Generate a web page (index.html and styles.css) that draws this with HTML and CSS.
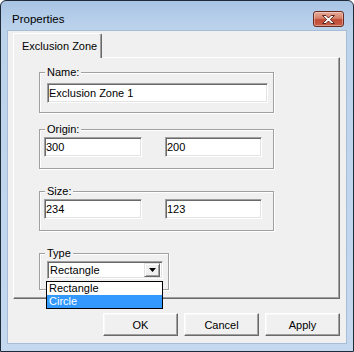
FILE: index.html
```html
<!DOCTYPE html>
<html lang="en">
<head>
    <meta charset="UTF-8">
    <title>Properties</title>
    <link rel="stylesheet" href="styles.css">
</head>
<body>
	<div class="window">
		<div class="titlebar">
			<span class="title">Properties</span>
			<button class="close">
				<svg width="15" height="11" viewBox="0 0 15 11">
					<path d="M1.5 1.5h3.5l2.5 2.5 2.5-2.5h3.5l-4.2 4 4.2 4h-3.5l-2.5-2.5-2.5 2.5h-3.5l4.2-4z" fill="#fff" stroke="#5a2a22" stroke-width="1"/>
				</svg>
			</button>
		</div>

		<div class="client">
			<div class="tabs">
				<div class="tab">Exclusion Zone</div>
			</div>

			<div class="panel">
				<fieldset class="group group-name">
					<legend>Name:</legend>
					<input class="field field-name" type="text" value="Exclusion Zone 1">
				</fieldset>

				<fieldset class="group group-origin">
					<legend>Origin:</legend>
					<div class="pair">
						<input class="field field-a" type="text" value="300">
						<input class="field field-b" type="text" value="200">
					</div>
				</fieldset>

				<fieldset class="group group-size">
					<legend>Size:</legend>
					<div class="pair">
						<input class="field field-a" type="text" value="234">
						<input class="field field-b" type="text" value="123">
					</div>
				</fieldset>

				<fieldset class="group group-type">
					<legend>Type</legend>
					<div class="combo">
						<span class="combo-text">Rectangle</span>
						<span class="combo-btn">
							<svg width="7" height="4" viewBox="0 0 7 4"><path d="M0 0h7L3.5 4z" fill="#000"/></svg>
						</span>
						<ul class="combo-list">
							<li>Rectangle</li>
							<li class="selected">Circle</li>
						</ul>
					</div>
				</fieldset>
			</div>

			<div class="buttons">
				<button class="btn">OK</button>
				<button class="btn">Cancel</button>
				<button class="btn">Apply</button>
			</div>
		</div>
	</div>
</body>
</html>
```

FILE: styles.css
```css
*{
	font-family: 'Liberation Sans', Arial, sans-serif;
	margin: 0;
	padding: 0;
	box-sizing: border-box;
}

body{
	width: 354px;
	height: 352px;
	overflow: hidden;
	background: #fff;
}

/* window frame */
.window {
	width: 354px;
	height: 352px;
	display: flex;
	flex-direction: column;
	border: 1px solid #1f2b38;
	border-radius: 6px 6px 0 0;
	background: linear-gradient(#a9c4e4 0, #bcd3ec 28px, #c4d9f0 100%);
	padding: 0 6px 7px 6px;
}

.titlebar {
	display: flex;
	justify-content: space-between;
	align-items: flex-start;
	height: 29px;
	flex-shrink: 0;
}
.title {
	font-family: 'Liberation Sans', sans-serif;
	font-size: 11.5px;
	line-height: 14px;
	color: #000;
	padding: 11px 0 0 5px;
}
.close {
	display: flex;
	align-items: center;
	justify-content: center;
	width: 31px;
	height: 16px;
	margin: 10px 3px 0 0;
	border: 1px solid #6b2b20;
	border-radius: 3px;
	background: linear-gradient(#e8aa98 0, #d6806a 45%, #c04a34 55%, #c8604a 100%);
	box-shadow: inset 0 0 0 1px rgba(255,255,255,0.35);
}

.client {
	flex: 1;
	display: flex;
	flex-direction: column;
	background: #f0f0f0;
	border: 1px solid #a7bdd6;
	padding: 2px 4px 0 5px;
	font-size: 11px;
	color: #000;
}

/* tab strip */
.tabs {
	display: flex;
	height: 24px;
}
.tab {
	position: relative;
	z-index: 1;
	width: 89px;
	height: 25px;
	padding: 6px 0 0 8px;
	background: #f0f0f0;
	border-top: 1px solid #fff;
	border-left: 1px solid #fff;
	border-right: 1px solid #696969;
	box-shadow: inset -1px 0 0 #a0a0a0;
	border-radius: 2px 2px 0 0;
	line-height: 13px;
}

.panel {
	display: flex;
	flex-direction: column;
	align-items: flex-start;
	width: 327px;
	height: 242px;
	border: 1px solid;
	border-color: #fff #696969 #696969 #fff;
	box-shadow: inset -1px -1px 0 #a0a0a0;
	padding: 8px 0 0 25px;
}

/* group boxes */
.group {
	border: 1px solid #a0a0a0;
	box-shadow: inset 1px 1px 0 #fff, 1px 1px 0 #fff;
	min-width: 0;
	width: 235px;
}
.group legend {
	margin-left: 5px;
	padding: 0 2px;
	line-height: 13px;
	background: #f0f0f0;
}
.group-name {
	padding: 4px 0 9px 0;
}
.group-origin,
.group-size {
	padding: 1px 0 11px 0;
}
.group-origin {
	margin-top: 10px;
}
.group-size,
.group-type {
	margin-top: 16px;
}
.group-type {
	width: 130px;
	padding: 1px 0 10px 0;
}

.field {
	height: 20px;
	border: 1px solid;
	border-color: #a0a0a0 #fff #fff #a0a0a0;
	box-shadow: inset 1px 1px 0 #696969, inset -1px -1px 0 #e3e3e3;
	background: #fff;
	padding: 0 0 0 1px;
	font-size: 11px;
	color: #000;
	outline: none;
}
.field-name {
	width: 221px;
	margin-left: 7px;
}
.pair {
	display: flex;
	gap: 23px;
	margin-left: 4px;
}
.field-a {
	width: 98px;
}
.field-b {
	width: 97px;
}

/* combo box */
.combo {
	position: relative;
	display: flex;
	align-items: center;
	justify-content: space-between;
	width: 116px;
	height: 18px;
	margin-left: 7px;
	border: 1px solid;
	border-color: #a0a0a0 #fff #fff #a0a0a0;
	box-shadow: inset 1px 1px 0 #696969, inset -1px -1px 0 #e3e3e3;
	background: #fff;
	padding: 0 2px 0 2px;
}
.combo-btn {
	display: flex;
	align-items: center;
	justify-content: center;
	width: 16px;
	height: 14px;
	background: #f0f0f0;
	border: 1px solid;
	border-color: #e3e3e3 #696969 #696969 #e3e3e3;
	box-shadow: inset 1px 1px 0 #fff, inset -1px -1px 0 #a0a0a0;
}
.combo-list {
	position: absolute;
	top: 19px;
	left: -2px;
	width: 117px;
	list-style: none;
	background: #fff;
	border: 1px solid #000;
	z-index: 2;
}
.combo-list li {
	height: 13px;
	line-height: 13px;
	padding-left: 2px;
	font-size: 11px;
}
.combo-list .selected {
	background: #3399ff;
	color: #fff;
}

/* dialog buttons */
.buttons {
	display: flex;
	justify-content: flex-end;
	gap: 6px;
	margin-top: 14px;
	width: 327px;
}
.btn {
	width: 75px;
	height: 23px;
	font-size: 11px;
	color: #000;
	background: #f0f0f0;
	border: 1px solid;
	border-color: #fff #696969 #696969 #fff;
	box-shadow: inset -1px -1px 0 #a0a0a0, inset 1px 1px 0 #f8f8f8;
}
```
